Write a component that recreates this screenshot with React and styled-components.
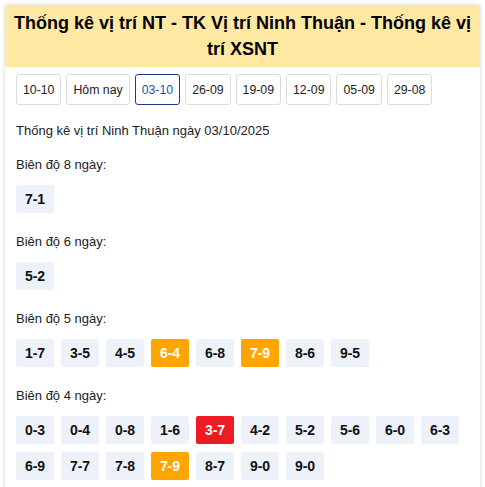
import React from "react";
import styled, { createGlobalStyle } from "styled-components";

const Global = createGlobalStyle`
  body {
    margin: 0;
    background: #fff;
    font-family: "Liberation Sans", Arial, sans-serif;
  }
`;

const Card = styled.div`
  margin: 5px;
  background: #fff;
  box-shadow: 0 0 4px rgba(0, 0, 0, 0.18);
  padding-bottom: 10px;
`;

const Header = styled.h1`
  margin: 0;
  background: #ffe9a2;
  padding: 5px 6px;
  font-size: 18px;
  line-height: 26px;
  font-weight: 700;
  text-align: center;
  color: #000;
`;

const Body = styled.div`
  padding: 7px 11px 0;
`;

const Tabs = styled.div`
  display: flex;
  flex-wrap: wrap;
  gap: 5px;
`;

const Tab = styled.a`
  display: flex;
  align-items: center;
  height: 31px;
  box-sizing: border-box;
  padding: 0 6px;
  border: 1px solid ${(p) => (p.active ? "#1d3c8c" : "#dcdcdc")};
  border-radius: 3px;
  font-size: 12.3px;
  color: ${(p) => (p.active ? "#1d4fb8" : "#222")};
  text-decoration: none;
`;

const Intro = styled.p`
  margin: 18px 0 0;
  font-size: 13px;
  line-height: 16px;
  color: #222;
`;

const Section = styled.div`
  margin-top: 18px;
  & + & {
    margin-top: 21px;
  }
`;

const Label = styled.div`
  font-size: 13px;
  line-height: 16px;
  color: #222;
  margin-bottom: 12px;
`;

const Chips = styled.div`
  display: flex;
  flex-wrap: wrap;
  gap: 8px 7px;
`;

const chipBg = { normal: "#edf1f9", orange: "#ffa500", red: "#ed1c24" };

const Chip = styled.span`
  width: 38px;
  height: 28px;
  display: flex;
  align-items: center;
  justify-content: center;
  border-radius: 2px;
  background: ${(p) => chipBg[p.tone || "normal"]};
  color: ${(p) => (p.tone ? "#fff" : "#111")};
  font-size: 14px;
  font-weight: 700;
`;

const tabs = ["10-10", "Hôm nay", "03-10", "26-09", "19-09", "12-09", "05-09", "29-08"];

const groups = [
  { days: 8, items: [["7-1"]] },
  { days: 6, items: [["5-2"]] },
  {
    days: 5,
    items: [["1-7"], ["3-5"], ["4-5"], ["6-4", "orange"], ["6-8"], ["7-9", "orange"], ["8-6"], ["9-5"]],
  },
  {
    days: 4,
    items: [
      ["0-3"], ["0-4"], ["0-8"], ["1-6"], ["3-7", "red"], ["4-2"], ["5-2"], ["5-6"], ["6-0"], ["6-3"],
      ["6-9"], ["7-7"], ["7-8"], ["7-9", "orange"], ["8-7"], ["9-0"], ["9-0"],
    ],
  },
];

export default function App() {
  return (
    <>
      <Global />
      <Card>
        <Header>Thống kê vị trí NT - TK Vị trí Ninh Thuận - Thống kê vị trí XSNT</Header>
        <Body>
          <Tabs>
            {tabs.map((t) => (
              <Tab key={t} active={t === "03-10" ? 1 : 0} href="#">
                {t}
              </Tab>
            ))}
          </Tabs>
          <Intro>Thống kê vị trí Ninh Thuận ngày 03/10/2025</Intro>
          {groups.map((g) => (
            <Section key={g.days}>
              <Label>Biên độ {g.days} ngày:</Label>
              <Chips>
                {g.items.map(([v, tone], i) => (
                  <Chip key={i} tone={tone}>
                    {v}
                  </Chip>
                ))}
              </Chips>
            </Section>
          ))}
        </Body>
      </Card>
    </>
  );
}
